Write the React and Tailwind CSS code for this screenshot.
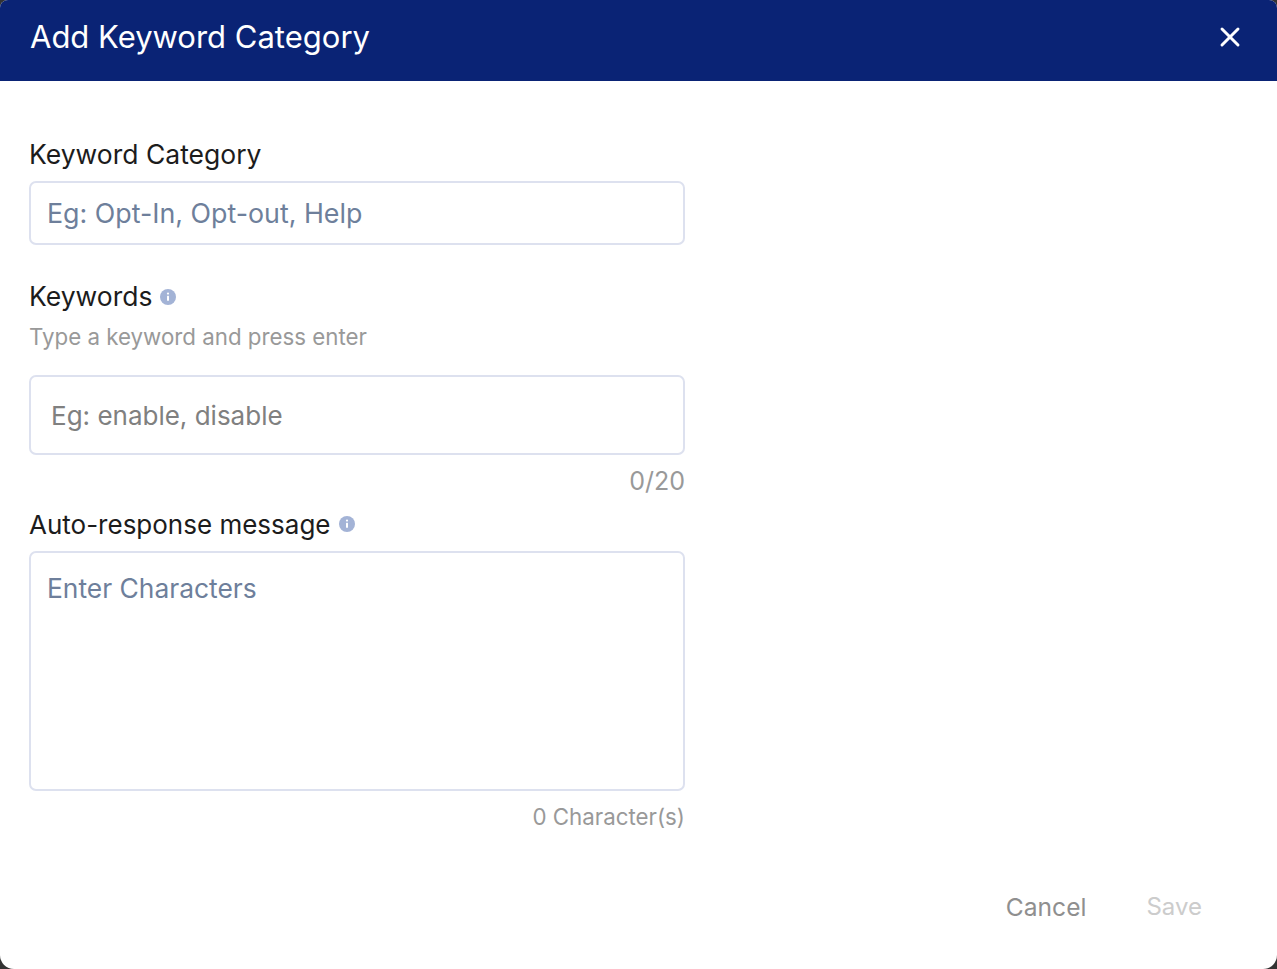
import { X } from 'lucide-react'

function InfoDot() {
  return (
    <svg width="16" height="16" viewBox="0 0 16 16" className="shrink-0">
      <circle cx="8" cy="8" r="8" fill="#a3b3d6" />
      <circle cx="8" cy="4.6" r="1.1" fill="#fff" />
      <rect x="7" y="6.8" width="2" height="5" rx="0.5" fill="#fff" />
    </svg>
  )
}

export default function App() {
  return (
    <div className="h-[969px] w-full overflow-hidden bg-[#333333] font-['Inter',sans-serif]">
      <div className="flex h-full flex-col overflow-hidden rounded-t-[8px] rounded-b-[14px] bg-white">
        {/* Header */}
        <div className="flex h-[81px] shrink-0 items-center justify-between bg-[#0a2375] pb-[7px] pl-[30px] pr-[31px]">
          <h1 className="text-[31px] font-normal text-white">Add Keyword Category</h1>
          <button className="text-white">
            <X size={32} strokeWidth={2.2} />
          </button>
        </div>

        {/* Form */}
        <div className="w-[656px] ml-[29px] pt-[55px]">
          <label className="block h-[36px] text-[26.5px] leading-[36px] text-[#1c1c1c]">Keyword Category</label>
          <input
            placeholder="Eg: Opt-In, Opt-out, Help"
            className="mt-[9px] block h-[64px] w-full rounded-[7px] border-2 border-[#dde1ef] px-[16px] text-[26.8px] outline-none placeholder:text-[#6e7f9b]"
          />

          <div className="mt-[34px] flex h-[36px] items-center gap-[8px] text-[26.5px] text-[#1c1c1c]">
            <span>Keywords</span>
            <InfoDot />
          </div>
          <p className="mt-[7px] h-[30px] text-[22.3px] leading-[30px] text-[#999999]">Type a keyword and press enter</p>
          <input
            placeholder="Eg: enable, disable"
            className="mt-[23px] block h-[80px] w-full rounded-[7px] border-2 border-[#dde1ef] px-[20px] text-[26px] outline-none placeholder:text-[#808080]"
          />
          <p className="mt-[11px] h-[30px] text-right text-[25px] leading-[30px] text-[#999999]">0/20</p>

          <div className="mt-[10px] flex h-[36px] items-center gap-[8px] text-[26px] text-[#1c1c1c]">
            <span>Auto-response message</span>
            <InfoDot />
          </div>
          <textarea
            placeholder="Enter Characters"
            className="mt-[9px] block h-[240px] w-full resize-none rounded-[7px] border-2 border-[#dde1ef] px-[16px] py-[16px] text-[26.4px] outline-none placeholder:text-[#6e7f9b]"
          />
          <p className="mt-[11px] h-[30px] text-right text-[22.3px] leading-[30px] text-[#999999]">0 Character(s)</p>
        </div>

        {/* Footer */}
        <div className="mt-[57px] flex items-center justify-end gap-[60px] pr-[75px]">
          <button className="text-[24.6px] text-[#8f8f8f]">Cancel</button>
          <button className="text-[24px] text-[#cccccc]">Save</button>
        </div>
      </div>
    </div>
  )
}
